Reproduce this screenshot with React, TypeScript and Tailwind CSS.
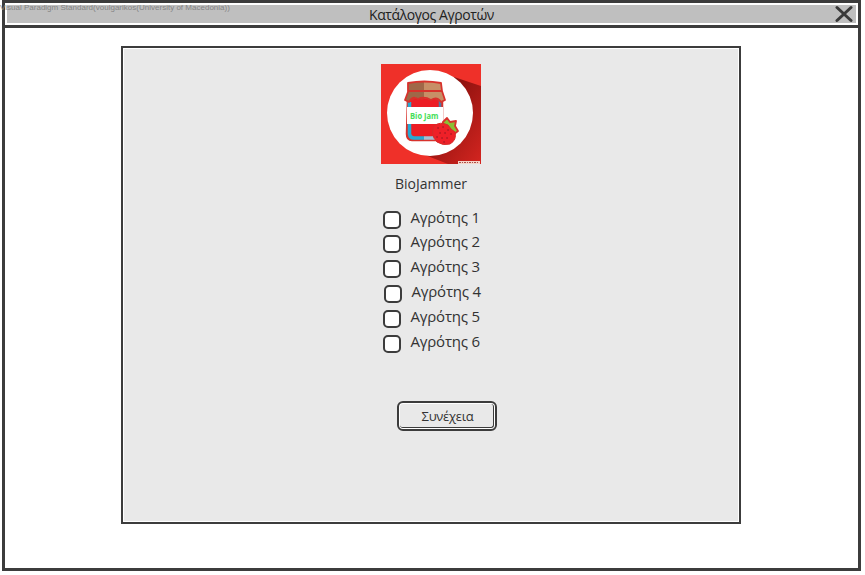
import React from "react";

const farmers = [
  { name: "Αγρότης 1", row: "h-6" },
  { name: "Αγρότης 2", row: "h-[25px]" },
  { name: "Αγρότης 3", row: "h-[25px]" },
  { name: "Αγρότης 4", row: "h-[25px] pl-px" },
  { name: "Αγρότης 5", row: "h-[25px]" },
  { name: "Αγρότης 6", row: "h-[25px]" },
];

function JamLogo() {
  return (
    <svg width="100" height="100" viewBox="0 0 100 100" className="block">
      <defs>
        <linearGradient id="shade" x1="0" y1="0" x2="1" y2="1">
          <stop offset="0.35" stopColor="#8f120f" />
          <stop offset="1" stopColor="#d42520" />
        </linearGradient>
      </defs>
      <rect width="100" height="100" fill="#ef3029" />
      <path d="M73 13 L100 22 V100 H67 L39 89Z" fill="url(#shade)" />
      <circle cx="49" cy="49" r="43" fill="#fff" />
      <path d="M27 35 H61 V70 Q61 76 55 76 H31 Q26 76 26 70Z" fill="#ec1c24" stroke="#d8322c" strokeWidth="2.5" />
      <path d="M28.5 38 V70 Q29 74 33 74 H43" fill="none" stroke="#27a9d4" strokeWidth="3.5" />
      <path d="M43 74 H54" stroke="#a5c0d5" strokeWidth="3.5" />
      <path d="M59 36 V60" stroke="#5277a1" strokeWidth="2.5" />
      <path d="M32 36 Q36 33 41 36 Q48 32 55 36 V44 H32Z" fill="#ec1c24" />
      <path d="M27 19 Q43 16 60 19 L61 27 L64 36 L60 38 Q56 32 50 36 Q43 32 37 35 Q31 31 28 38 L24 36 L27 28Z" fill="#9f6848" />
      <path d="M43 18 Q53 17 60 19 L61 27 L64 36 L60 38 Q56 32 50 36 L43 34Z" fill="#c78f66" />
      <path d="M27 19 Q43 16 60 19 L61 27 L64 36 L60 38 Q56 32 50 36 Q43 32 37 35 Q31 31 28 38 L24 36 L27 28Z M27 27 H61" fill="none" stroke="#d8322c" strokeWidth="1.8" strokeLinejoin="round" />
      <rect x="26" y="43" width="36" height="17" fill="#fff" />
      <text x="29" y="54.5" fontSize="9" fontWeight="700" textLength="28.5" lengthAdjust="spacingAndGlyphs" fill="#45de58" fontFamily="Comic Sans MS, Open Sans, sans-serif">Bio Jam</text>
      <path d="M62 58 L66 54 L69 58 L75 57 L74 62 L77 67 L72 71 L61 63Z" fill="#8abf35" stroke="#d8322c" strokeWidth="1.8" strokeLinejoin="round" />
      <path d="M53 62 Q59 57 67 61 L70 65 L74 68 Q76 76 69 80 Q62 82 56 78 Q49 71 53 62Z" fill="#ee2028" stroke="#d52c2a" strokeWidth="1" />
      <path d="M57 64h.1M62 63h.1M67 66h.1M59 69h.1M64 69h.1M70 70h.1M56 73h.1M61 74h.1M66 74h.1M63 78h.1" stroke="#821722" strokeWidth="1.3" strokeLinecap="round" />
      <rect x="77" y="97" width="22" height="3" fill="#f5d4ca" />
      <path d="M78 98.5 H98" stroke="#a95048" strokeWidth="1.2" strokeDasharray="2 1 1 1" />
    </svg>
  );
}

export default function App() {
  return (
    <div className="relative h-[575px] w-[865px] overflow-hidden bg-white pl-0.5 font-['Comic_Sans_MS','Open_Sans','Noto_Sans',sans-serif] text-[#333]">
      <div className="flex h-[571px] w-[859px] flex-col border-[3px] border-[#3c3c3c] bg-white">
        <header className="h-[25px] shrink-0 border-b-[3px] border-[#3c3c3c] px-0.5 py-0.5">
          <div className="relative flex h-[18px] items-center justify-center bg-[#bfbfbf] text-[14px] leading-[18px] tracking-[-0.42px] text-[#222]">
            <h1 className="pt-0.5">Κατάλογος Αγροτών</h1>
            <button aria-label="Close" className="absolute right-[3px] top-0">
              <svg width="18" height="18" viewBox="0 0 18 18" className="block">
                <path d="M2 2.5 L16 15.5 M16 2.5 L2 15.5" stroke="#393939" strokeWidth="3" strokeLinecap="round" />
              </svg>
            </button>
          </div>
        </header>

        <main className="ml-[116px] mt-[18px] h-[478px] w-[620px] shrink-0 border-2 border-[#3c3c3c] bg-white p-px">
          <div className="flex h-full flex-col bg-[#e9e9e9] pt-[15px]">
            <div className="ml-[257px] w-[100px]">
              <JamLogo />
              <p className="mt-[10px] whitespace-nowrap text-center text-[14px] leading-5">BioJammer</p>
            </div>
            <ul className="ml-[258.5px] mt-4">
              {farmers.map((farmer) => (
                <li key={farmer.name} className={farmer.row}>
                  <label className="flex items-start">
                    <input type="checkbox" className="mt-px size-[18px] shrink-0 appearance-none rounded-[5px] border-2 border-[#3c3c3c] bg-white" />
                    <span className="-mt-[3px] ml-[10px] whitespace-nowrap text-[15px] leading-5 tracking-[-0.2px]">{farmer.name}</span>
                  </label>
                </li>
              ))}
            </ul>
            <button className="ml-[273px] mt-[42px] h-[30px] w-[100px] shrink-0 rounded-[6px] border-2 border-[#3c3c3c] bg-white p-px">
              <span className="flex h-full items-center justify-center rounded-[3px] border-b border-r border-[#3c3c3c] bg-[#e9e9e9] pl-0.5 pt-0.5 text-[13px] leading-none tracking-[-0.3px]">
                Συνέχεια
              </span>
            </button>
          </div>
        </main>
      </div>
      <span className="absolute left-0 top-[2px] whitespace-nowrap font-['Liberation_Sans',sans-serif] text-[8px] leading-[11px] tracking-[0.01px] text-[#858585]">
        Visual Paradigm Standard(voulgarikos(University of Macedonia))
      </span>
    </div>
  );
}
